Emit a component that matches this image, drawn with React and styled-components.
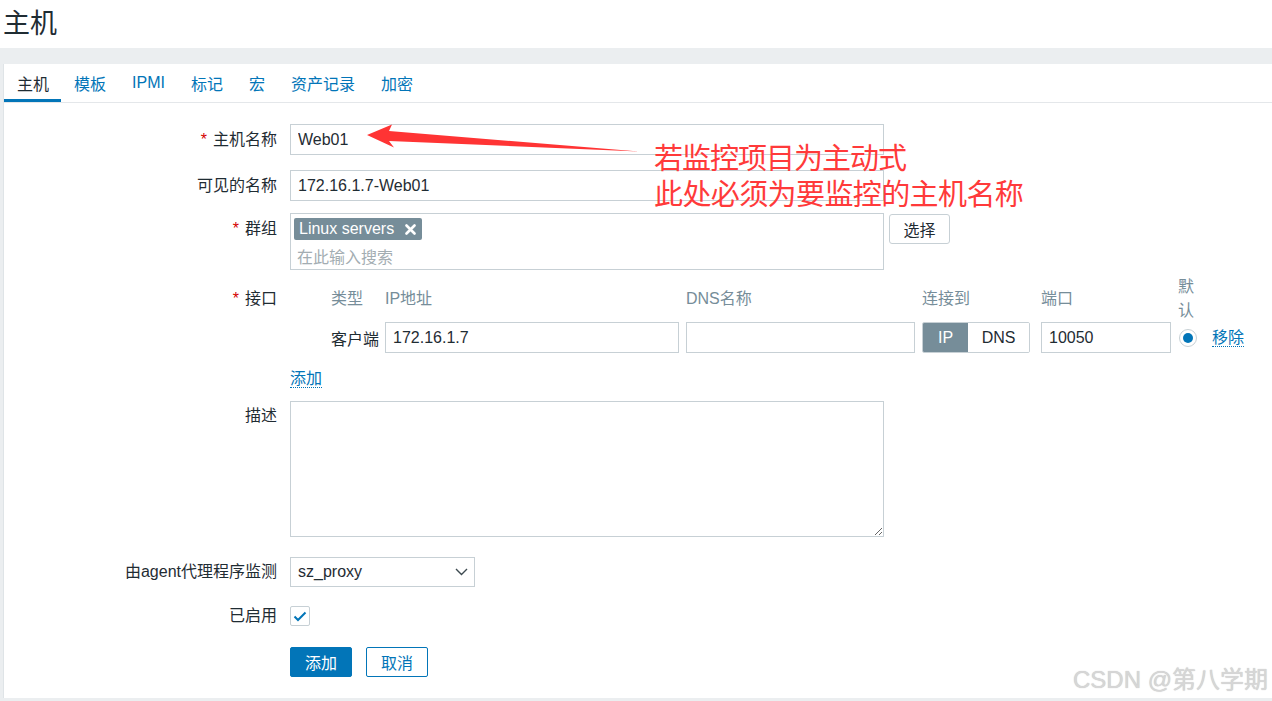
import React from 'react'
import styled, { createGlobalStyle } from 'styled-components'

const FONT = `"Liberation Sans", Arial, "Noto Sans CJK SC", sans-serif`
const CJK = `"Noto Sans CJK SC", "Liberation Sans", sans-serif`
const BLUE = '#0275b8'
const DARK = '#1f2c33'
const LINE = '#c7d0d5'
const SLATE = '#768d99'

const GlobalStyle = createGlobalStyle`
	html, body, #root {
		margin: 0;
		height: 100%;
	}
	body {
		font-family: ${FONT};
		color: ${DARK};
		background: #ebeef0;
	}
	* {
		box-sizing: border-box;
	}
`

const Page = styled.div`
	position: relative;
	display: flex;
	flex-direction: column;
	height: 100vh;
	overflow: hidden;
`

const TitleBar = styled.div`
	display: flex;
	align-items: center;
	height: 48px;
	padding: 0 0 6px 3px;
	background: #fff;
	font-size: 27px;
	color: ${DARK};
`

const Content = styled.div`
	flex: 1;
	display: flex;
	padding: 16px 0 3px 3px;
`

const Panel = styled.div`
	flex: 1;
	background: #fff;
	border-left: 1px solid #dfe4e7;
`

const TabBar = styled.div`
	display: flex;
	height: 39px;
	border-bottom: 1px solid #e4e7ea;
`

const Tab = styled.div`
	display: flex;
	align-items: center;
	padding: 2px 13px 0;
	font-size: 16px;
	color: ${(p) => (p.$active ? DARK : BLUE)};
	border-bottom: 3px solid ${(p) => (p.$active ? BLUE : 'transparent')};
	&:first-child {
		padding-left: 13px;
		padding-right: 12px;
	}
`

const Form = styled.div`
	padding-top: 21px;
`

const Row = styled.div`
	display: grid;
	grid-template-columns: 273px auto;
	column-gap: 13px;
	align-items: ${(p) => p.$align || 'center'};
	margin-top: ${(p) => p.$mt || 0}px;
`

const Label = styled.div`
	text-align: right;
	font-size: 16px;
	line-height: 20px;
	padding-top: ${(p) => p.$pt || 0}px;
	white-space: nowrap;
`

const Star = styled.span`
	color: #d40000;
	margin-right: 6px;
`

const Field = styled.div`
	display: flex;
	align-items: ${(p) => p.$align || 'center'};
	gap: 5px;
`

const TextInput = styled.input`
	width: ${(p) => p.$w}px;
	height: 31px;
	padding: 0 7px;
	border: 1px solid ${LINE};
	border-radius: 0;
	font-family: ${FONT};
	font-size: 16px;
	color: ${DARK};
	background: #fff;
	outline: none;
`

const GroupBox = styled.div`
	width: 594px;
	height: 57px;
	border: 1px solid ${LINE};
	padding: 4px 3px;
`

const Tag = styled.span`
	display: inline-flex;
	align-items: center;
	gap: 11px;
	height: 22px;
	padding: 0 6px 0 5px;
	border-radius: 2px;
	background: ${SLATE};
	color: #fff;
	font-size: 16px;
`

const Placeholder = styled.div`
	margin-top: 4px;
	padding-left: 3px;
	font-size: 16px;
	color: #a3adb2;
`

const PlainButton = styled.button`
	width: 61px;
	height: 30px;
	margin-top: 1px;
	border: 1px solid ${LINE};
	border-radius: 3px;
	background: #fff;
	font-family: ${FONT};
	font-size: 16px;
	color: ${DARK};
`

const IfaceGrid = styled.div`
	display: grid;
	grid-template-columns: 34px 47px 294px 229px 112px 130px 27px auto;
	grid-template-rows: 47px 31px;
	column-gap: 7px;
	align-items: center;
	font-size: 16px;
`

const HeadCell = styled.div`
	color: ${SLATE};
	line-height: 24px;
	grid-column: ${(p) => p.$col};
`

const Cell = styled.div`
	grid-column: ${(p) => p.$col};
	white-space: nowrap;
`

const Toggle = styled.div`
	display: flex;
	width: 108px;
	height: 31px;
	border: 1px solid ${LINE};
	border-radius: 2px;
	overflow: hidden;
`

const ToggleSeg = styled.div`
	display: flex;
	align-items: center;
	justify-content: center;
	width: ${(p) => p.$w}px;
	background: ${(p) => (p.$on ? SLATE : '#fff')};
	color: ${(p) => (p.$on ? '#fff' : DARK)};
	font-size: 16px;
`

const Radio = styled.div`
	width: 18px;
	height: 18px;
	margin-left: 1px;
	border: 1px solid ${LINE};
	border-radius: 50%;
	display: flex;
	align-items: center;
	justify-content: center;
	&::after {
		content: '';
		width: 10px;
		height: 10px;
		border-radius: 50%;
		background: ${BLUE};
	}
`

const LinkText = styled.span`
	color: ${BLUE};
	font-size: 16px;
	line-height: 20px;
	border-bottom: 1px dotted ${BLUE};
`

const TextArea = styled.textarea`
	display: block;
	width: 594px;
	height: 136px;
	margin: 0;
	border: 1px solid ${LINE};
	border-radius: 0;
	font-family: ${FONT};
	font-size: 16px;
	outline: none;
`

const SelectBox = styled.div`
	display: flex;
	align-items: center;
	justify-content: space-between;
	width: 185px;
	height: 30px;
	padding: 0 6px 0 7px;
	border: 1px solid ${LINE};
	font-size: 16px;
`

const CheckBox = styled.div`
	display: flex;
	align-items: center;
	justify-content: center;
	width: 20px;
	height: 20px;
	border: 1px solid ${LINE};
	border-radius: 2px;
`

const Buttons = styled.div`
	display: flex;
	gap: 14px;
`

const PrimaryButton = styled.button`
	width: 62px;
	height: 30px;
	border: 1px solid ${BLUE};
	border-radius: 2px;
	background: ${BLUE};
	color: #fff;
	font-family: ${FONT};
	font-size: 16px;
`

const SecondaryButton = styled(PrimaryButton)`
	background: #fff;
	color: ${BLUE};
`

const Arrow = styled.svg`
	position: absolute;
	top: 0;
	left: 0;
	pointer-events: none;
`

const Note = styled.div`
	position: absolute;
	left: 654px;
	top: 138px;
	font-family: ${CJK};
	font-size: 29px;
	line-height: 36px;
	color: #ff3a3a;
	pointer-events: none;
`

const NoteLine = styled.div`
	letter-spacing: ${(p) => p.$ls || 0}px;
`

const Watermark = styled.div`
	position: absolute;
	right: 4px;
	bottom: 7px;
	font-family: ${FONT};
	font-size: 24px;
	line-height: 28px;
	color: #d6d6d6;
	text-shadow: 0 0 1px rgba(0, 0, 0, 0.25);
	pointer-events: none;
`

const tabs = ['主机', '模板', 'IPMI', '标记', '宏', '资产记录', '加密']

export default function App() {
	return (
		<Page>
			<GlobalStyle />
			<TitleBar>主机</TitleBar>
			<Content>
				<Panel>
					<TabBar>
						{tabs.map((t, i) => (
							<Tab key={t} $active={i === 0}>
								{t}
							</Tab>
						))}
					</TabBar>
					<Form>
						<Row>
							<Label>
								<Star>*</Star>主机名称
							</Label>
							<TextInput $w={594} defaultValue="Web01" />
						</Row>
						<Row $mt={15}>
							<Label>可见的名称</Label>
							<TextInput $w={594} defaultValue="172.16.1.7-Web01" />
						</Row>
						<Row $mt={12} $align="start">
							<Label $pt={6}>
								<Star>*</Star>群组
							</Label>
							<Field $align="flex-start">
								<GroupBox>
									<Tag>
										Linux servers
										<svg width="11" height="11" viewBox="0 0 11 11">
											<path d="M1.5 1.5 L9.5 9.5 M9.5 1.5 L1.5 9.5" stroke="#fff" strokeWidth="2.6" strokeLinecap="round" />
										</svg>
									</Tag>
									<Placeholder>在此输入搜索</Placeholder>
								</GroupBox>
								<PlainButton>选择</PlainButton>
							</Field>
						</Row>
						<Row $mt={5} $align="start">
							<Label $pt={14}>
								<Star>*</Star>接口
							</Label>
							<IfaceGrid>
								<HeadCell $col={2}>类型</HeadCell>
								<HeadCell $col={3}>IP地址</HeadCell>
								<HeadCell $col={4}>DNS名称</HeadCell>
								<HeadCell $col={5}>连接到</HeadCell>
								<HeadCell $col={6}>端口</HeadCell>
								<HeadCell $col={7}>默认</HeadCell>
								<Cell $col={2}>客户端</Cell>
								<TextInput $w={294} defaultValue="172.16.1.7" />
								<TextInput $w={229} defaultValue="" />
								<Toggle>
									<ToggleSeg $on $w={46}>IP</ToggleSeg>
									<ToggleSeg $w={62}>DNS</ToggleSeg>
								</Toggle>
								<TextInput $w={130} defaultValue="10050" />
								<Radio />
								<Cell $col={8}>
									<LinkText>移除</LinkText>
								</Cell>
							</IfaceGrid>
						</Row>
						<Row $mt={16}>
							<Label />
							<div>
								<LinkText>添加</LinkText>
							</div>
						</Row>
						<Row $mt={12} $align="start">
							<Label $pt={5}>描述</Label>
							<TextArea />
						</Row>
						<Row $mt={20}>
							<Label>由agent代理程序监测</Label>
							<SelectBox>
								sz_proxy
								<svg width="13" height="8" viewBox="0 0 13 8">
									<path d="M1 1 L6.5 6.5 L12 1" fill="none" stroke="#3d4a50" strokeWidth="1.4" />
								</svg>
							</SelectBox>
						</Row>
						<Row $mt={19}>
							<Label>已启用</Label>
							<CheckBox>
								<svg width="14" height="11" viewBox="0 0 14 11">
									<path d="M1.5 5.5 L5 9 L12.5 1.5" fill="none" stroke={BLUE} strokeWidth="2" />
								</svg>
							</CheckBox>
						</Row>
						<Row $mt={21}>
							<Label />
							<Buttons>
								<PrimaryButton>添加</PrimaryButton>
								<SecondaryButton>取消</SecondaryButton>
							</Buttons>
						</Row>
					</Form>
				</Panel>
			</Content>
			<Arrow width="1272" height="701" viewBox="0 0 1272 701">
				<polygon points="367,135 392,124.5 389,131 639,151.5 389,141 394,147.5" fill="#ff3434" />
			</Arrow>
			<Note>
				<NoteLine $ls={-1}>若监控项目为主动式</NoteLine>
				<NoteLine $ls={-0.6}>此处必须为要监控的主机名称</NoteLine>
			</Note>
			<Watermark>CSDN @第八学期</Watermark>
		</Page>
	)
}
